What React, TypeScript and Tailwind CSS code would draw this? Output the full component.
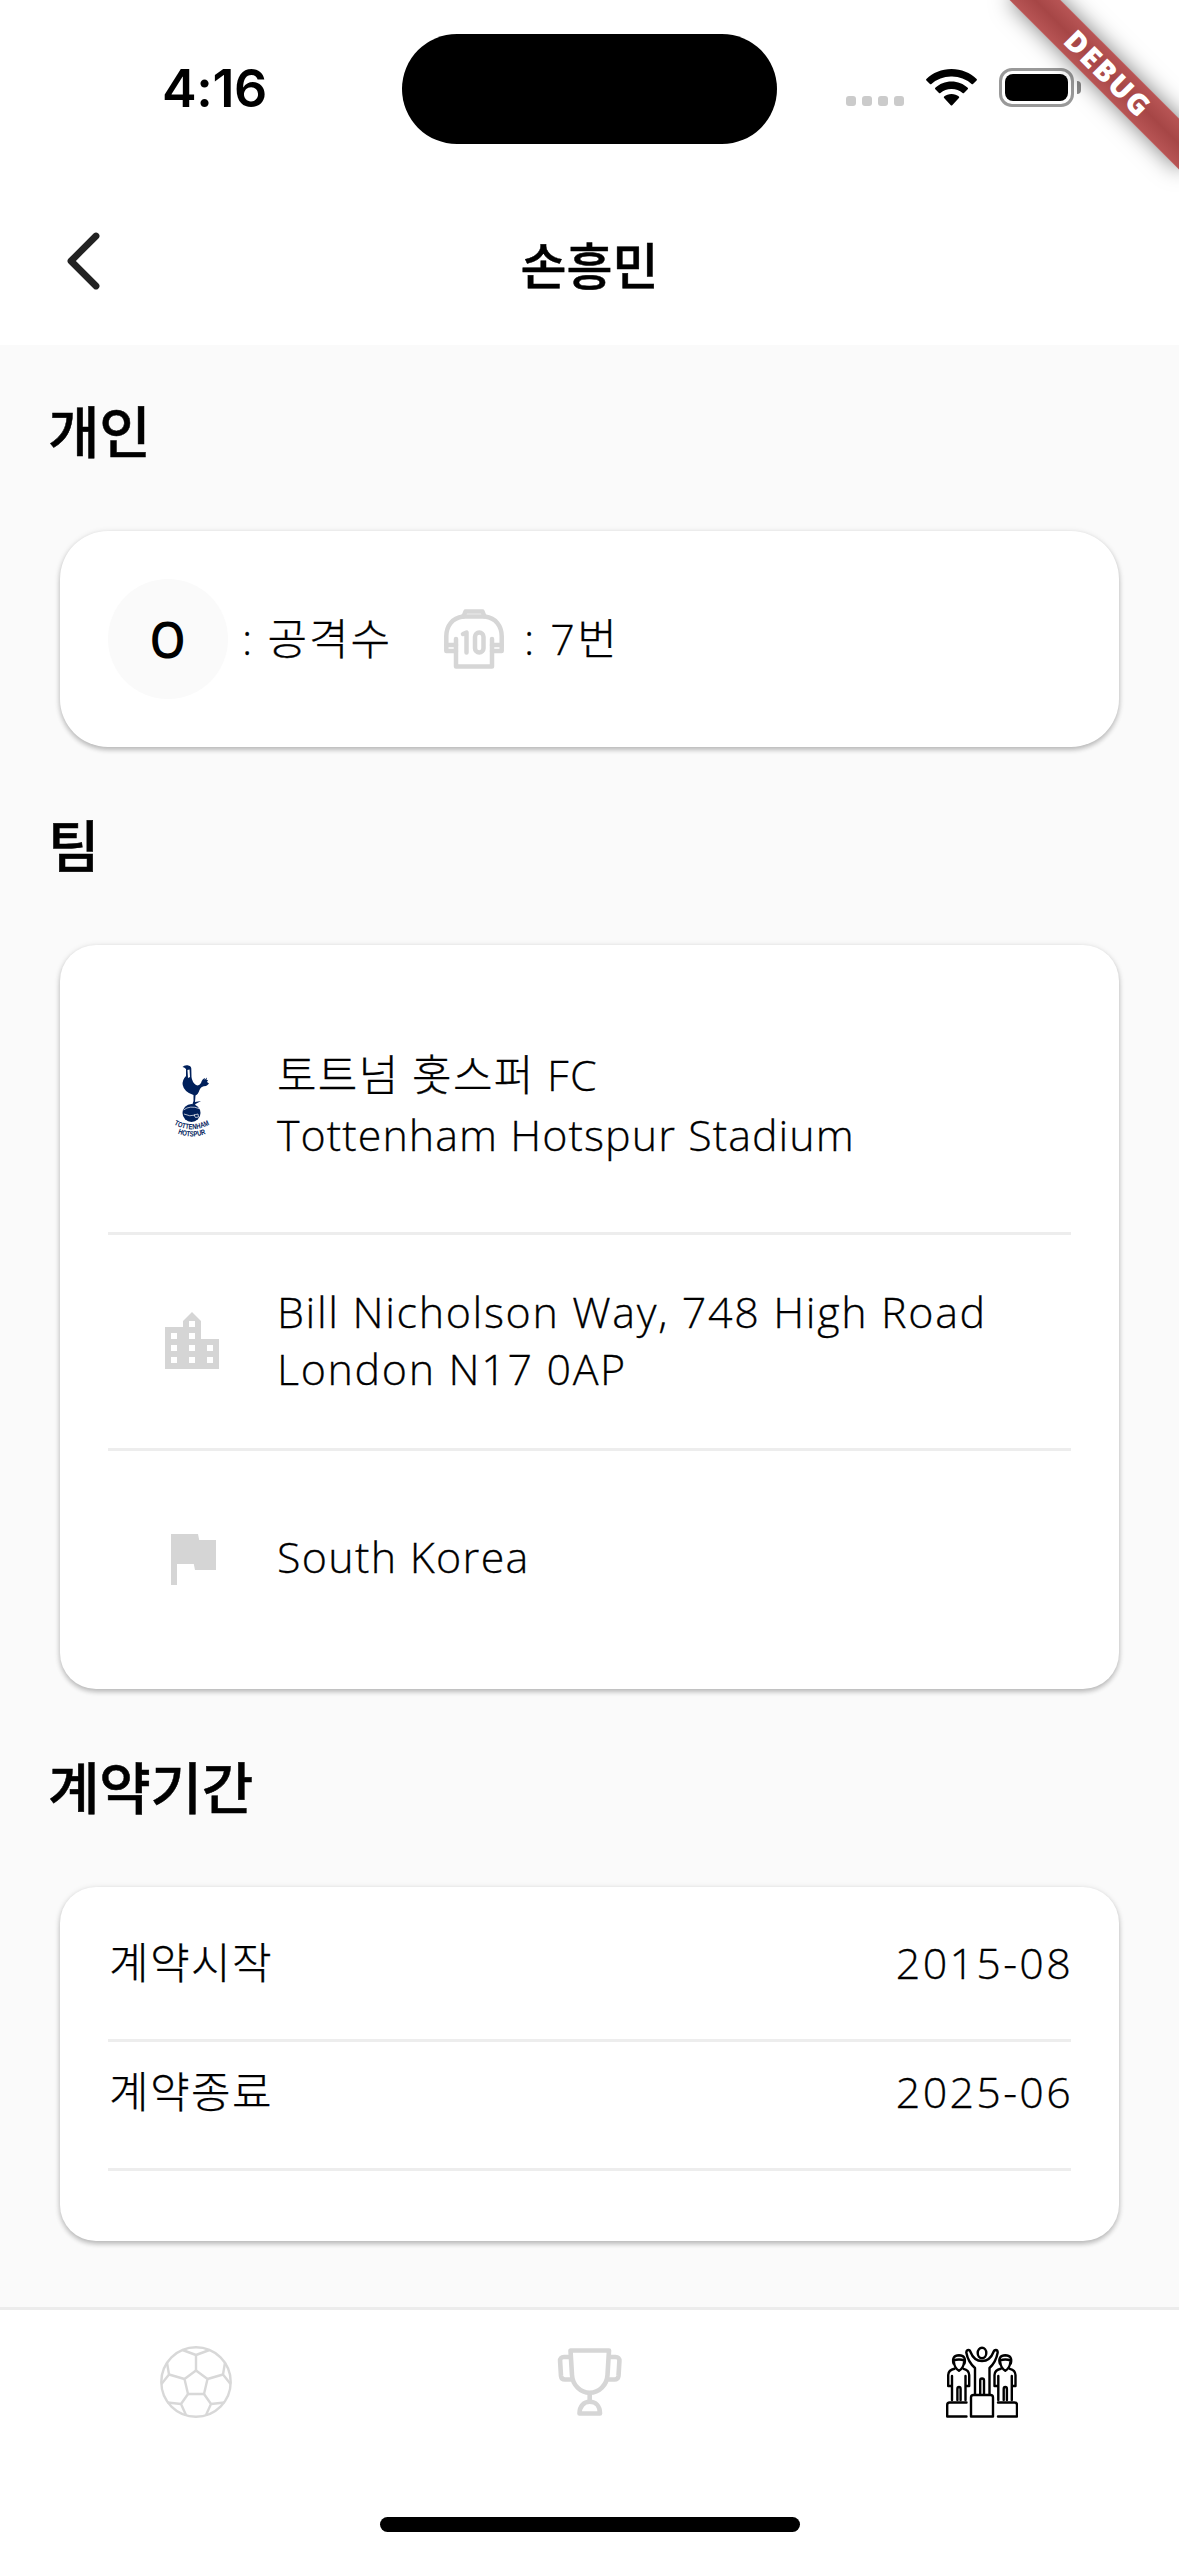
import type { ReactNode } from "react";

function StatusBar() {
  return (
    <div className="relative h-[177px] shrink-0">
      <div className="absolute left-[162px] top-[59px] text-[52px] leading-[60px] font-semibold tracking-[-0.4px] font-['Inter',sans-serif]">
        4:16
      </div>
      <div className="absolute left-[402px] top-[33.5px] h-[110.5px] w-[375px] rounded-full bg-black" />
      <div className="absolute left-[846px] top-[96px] flex gap-[6px]">
        {[0, 1, 2, 3].map((i) => (
          <span key={i} className="size-[10px] rounded-[3px] bg-[#cbcbcb]" />
        ))}
      </div>
      <svg className="absolute left-[926px] top-[69px]" width="51" height="37" viewBox="0 0 51 37">
        <path d="M25.5 0C35.4 0 44.2 3.800 50.600 10q.6.7 0 1.400l-3.600 3.600q-.7.6-1.400 0A29.500 29.500 0 0 0 25.500 7.500 29.500 29.500 0 0 0 5.400 15q-.7.6-1.400 0L.4 11.400q-.6-.7 0-1.400C6.800 3.800 15.600 0 25.500 0z" />
        <path d="M25.500 12.500c6.300 0 12 2.400 16.200 6.300q.7.7 0 1.400l-3.700 3.700q-.7.6-1.400 0A17 17 0 0 0 25.500 20a17 17 0 0 0-11.100 3.900q-.7.6-1.400 0l-3.700-3.700q-.7-.7 0-1.400c4.200-3.900 9.900-6.300 16.200-6.300z" />
        <path d="M25.500 25c2.900 0 5.400 1 7.400 2.600q.7.700 0 1.400l-6.700 7.200q-.7.700-1.400 0L18.100 29q-.7-.7 0-1.400C20.100 26 22.600 25 25.500 25z" />
      </svg>
      <div className="absolute left-[999px] top-[68px] h-[39px] w-[75px] rounded-[13px] border-3 border-[#999] p-[3px]">
        <div className="h-full w-full rounded-[8px] bg-black" />
      </div>
      <div className="absolute left-[1077px] top-[81px] h-[13px] w-[4px] rounded-r-full bg-[#888]" />
    </div>
  );
}

function DebugBanner() {
  return (
    <div className="absolute left-[987px] top-[54px] z-10 flex h-[36px] w-[240px] rotate-45 items-center justify-center bg-linear-to-b from-[#b85555] via-[#a64646] to-[#b85555] shadow-[0_0_22px_rgba(0,0,0,0.5)]">
      <span className="ml-[4px] text-[29px] leading-[36px] font-extrabold tracking-[1.8px] text-white font-['Open_Sans',sans-serif]">
        DEBUG
      </span>
    </div>
  );
}

function Heading({ children, first }: { children: ReactNode; first?: boolean }) {
  return (
    <h2
      className={
        (first ? "h-[186px] pb-[14px] " : "h-[198px] pb-[2px] ") +
        "flex items-center pl-[48px] text-[56px] leading-[60px] font-medium tracking-[-0.3px] [-webkit-text-stroke:0.5px_black]"
      }
    >
      {children}
    </h2>
  );
}

function Card({ children, className }: { children: ReactNode; className: string }) {
  return (
    <section
      className={
        "mx-[60px] bg-white px-[48px] shadow-[0_3px_5px_rgba(0,0,0,0.2),0_1px_6px_rgba(0,0,0,0.12)] " + className
      }
    >
      {children}
    </section>
  );
}

function JerseyIcon() {
  return (
    <svg width="60" height="60" viewBox="0 0 60 60" fill="none" stroke="#d6d6d6" strokeWidth="4.500" strokeLinecap="round" strokeLinejoin="round">
      <path d="M19.500 7.500 L21.500 2.500 H38.500 L40.500 7.500" />
      <path d="M19 7.500 H41 C52 9 57.500 17 57.700 27 V42 H48" />
      <path d="M19 7.500 C8 9 2.500 17 2.300 27 V42 H12" />
      <path d="M48 30 V57.500 H12 V30" />
      <path d="M3 36 H12 M48 36 H57" />
      <path d="M19 25 L22.500 23.500 V43.500" />
      <rect x="31" y="23.500" width="8.500" height="20" rx="4.250" />
    </svg>
  );
}

function ClubCrest() {
  return (
    <svg className="overflow-visible" width="72" height="72" viewBox="-8 0 72 72" fill="#00205b">
      <path d="M18.500 2 Q20 0 23.500 .3 Q27 .8 27.300 3.500 L27.500 12 Q28 17 32 20 Q35 21.500 37 18 Q38 14 41 13 L40.500 15 L43 12.500 L42.500 15 L44 15 L43 17 L45 18.500 L43.500 20 L42 21 Q37 21 35.500 25 Q34 29.500 31.500 30.500 L31 37 L37 36 L31.500 39 L30 42 L27.500 42 L29.500 36 L29.500 30 Q20 27 18.700 20 Q18 15 22 11 L22 4 Q20 2 18.500 2z" />
      <path d="M23.500 5 L25.500 4.500 L26 12 L24 13z" fill="#fff" />
      <circle cx="27.500" cy="48" r="9" />
      <path d="M19.500 45 Q26 40 35 43.500 M20 49 Q26 52 31 50 M30 50 l4 -1 l.5 3 l-3 .5z" fill="none" stroke="#fff" strokeWidth=".7" />
      <defs>
        <path id="arcTop" d="M10 59.500 Q27.500 69 46 59.500" />
        <path id="arcLow" d="M12.500 68 Q27.500 75 44 68" />
      </defs>
      <g fontFamily="Liberation Sans" fontWeight="700" fontSize="7.500">
        <text textLength="37" lengthAdjust="spacingAndGlyphs">
          <textPath href="#arcTop">TOTTENHAM</textPath>
        </text>
        <text textLength="29" lengthAdjust="spacingAndGlyphs">
          <textPath href="#arcLow" startOffset="4%">HOTSPUR</textPath>
        </text>
      </g>
    </svg>
  );
}

function CityIcon() {
  return (
    <svg width="72" height="72" viewBox="0 0 24 24" fill="#d5d5d5">
      <path d="M15 11V5l-3-3-3 3v2H3v14h18V11h-6zm-8 8H5v-2h2v2zm0-4H5v-2h2v2zm0-4H5V9h2v2zm6 8h-2v-2h2v2zm0-4h-2v-2h2v2zm0-4h-2V9h2v2zm0-4h-2V5h2v2zm6 12h-2v-2h2v2zm0-4h-2v-2h2v2z" />
    </svg>
  );
}

function FlagIcon() {
  return (
    <svg width="72" height="72" viewBox="0 0 24 24" fill="#d5d5d5">
      <path d="M14.400 6L14 4H5v17h2v-7h5.600l.4 2h7V6z" />
    </svg>
  );
}

function BallIcon() {
  return (
    <svg width="72" height="72" viewBox="0 0 72 72" fill="none" stroke="#d8d8d8" strokeWidth="2.400" strokeLinejoin="round">
      <circle cx="36" cy="36" r="34.700" />
      <path d="M36 24.500 L47.500 33 L44 48 H28 L24.500 33z" />
      <path d="M36 24.500 V9 M22.500 4 L36 9 L49.500 4" />
      <path d="M47.500 33 L63 28.500 M65 16.500 L63 28.500 L70.500 38" />
      <path d="M24.500 33 L9 28.500 M7 16.500 L9 28.500 L1.500 38" />
      <path d="M44 48 L51 58 M64.500 56.500 L51 58 L46 69" />
      <path d="M28 48 L21 58 M7.500 56.500 L21 58 L26 69" />
    </svg>
  );
}

function TrophyIcon() {
  return (
    <svg width="72" height="72" viewBox="0 0 72 72" fill="none" stroke="#d6d6d6" strokeWidth="4.600" strokeLinejoin="round">
      <path d="M17.500 4.500 H56 L54.500 29 C54 39 46 46.800 36.700 46.800 C27.500 46.800 19.500 39 19 29z" />
      <path d="M18 11 H11 Q7 11 7.100 15 L8 30 Q8.400 33.500 12 33.500 H19.500" />
      <path d="M55.500 11 H62.500 Q66.500 11 66.400 15 L65.500 30 Q65 33.500 61.500 33.500 H54" />
      <path d="M36.700 47 V56" />
      <path d="M26.500 67.500 C26.500 60 31 55.800 36.700 55.800 C42.500 55.800 47 60 47 67.500z" />
    </svg>
  );
}

function SidePerson() {
  return (
    <>
      <path d="M7.500 17.500 Q5.500 9.500 13 9.200 Q20.500 9.500 18.500 17.500" />
      <path d="M7.500 14.500 Q13 12.500 18.500 14.500" />
      <path d="M8 16.500 Q8.500 22 13 24.800 Q17.500 22 18 16.500" />
      <path d="M8.500 22.800 Q2.500 24 2.200 29 V40 H6 V30 M6 40 V54 M17.500 22.800 Q23 24 23.200 29 V40 H19.500 V30 M19.500 40 V54" />
      <path d="M11.400 54 V43 Q11.400 41 13 41 Q14.600 41 14.600 43 V54" />
    </>
  );
}

function PodiumIcon() {
  return (
    <svg width="72" height="72" viewBox="0 0 72 72" fill="none" stroke="#000" strokeWidth="2.400" strokeLinejoin="round" strokeLinecap="round">
      <g>
        <SidePerson />
      </g>
      <g transform="translate(46.300 0)">
        <SidePerson />
      </g>
      <path d="M20.500 70.500 H1.200 V59 Q1.200 56.500 3.700 56.500 H20.500" />
      <path d="M52 70.500 H71 V59 Q71 56.500 68.500 56.500 H52" />
      <path d="M25 70.500 V51.500 Q25 49 27.500 49 H44.500 Q47 49 47 51.500 V70.500z" />
      <ellipse cx="36" cy="7" rx="4.300" ry="5.300" />
      <path d="M29 48.500 V22 Q22 16 20.300 6.500 Q20.500 4 22.500 4 Q24 4 24.500 6 Q28 15 36 15 Q44 15 47.500 6 Q48 4 49.800 4 Q51.700 4.200 51.700 6.500 Q50 16 43.500 22 V48.500" />
      <path d="M34.200 48.500 V34.500 Q34.200 32.500 36 32.500 Q38 32.500 38 34.500 V48.500" />
    </svg>
  );
}

export default function App() {
  return (
    <div className="relative flex h-[2556px] w-[1179px] flex-col overflow-hidden bg-[#fafafa] text-[43px] font-light text-black font-['Open_Sans','Noto_Sans_CJK_KR',sans-serif]">
      <DebugBanner />
      <header className="h-[345px] shrink-0 bg-white">
        <StatusBar />
        <div className="grid h-[168px] grid-cols-[1fr_auto_1fr] items-center">
          <svg className="ml-[63px]" width="40" height="60" viewBox="0 0 40 60" fill="none" stroke="#222" strokeWidth="6.800" strokeLinecap="round" strokeLinejoin="round">
            <path d="M33 5 L8 30 L33 55" />
          </svg>
          <h1 className="pt-[9px] text-[50px] leading-[60px] font-medium [-webkit-text-stroke:0.5px_black]">손흥민</h1>
        </div>
      </header>

      <main className="flex-1">
        <Heading first>개인</Heading>
        <Card className="flex h-[216px] items-center rounded-[48px]">
          <div className="flex size-[120px] items-center justify-center rounded-full bg-[#fafafa] text-[50px] font-semibold">
            <span className="scale-x-[0.92]">O</span>
          </div>
          <span className="ml-[14px] tracking-[2px] [-webkit-text-stroke:0.3px_black]">: 공격수</span>
          <div className="ml-[52px]">
            <JerseyIcon />
          </div>
          <span className="ml-[20px] tracking-[2.4px] [-webkit-text-stroke:0.3px_black]">: 7번</span>
        </Card>

        <Heading>팀</Heading>
        <Card className="flex h-[744px] flex-col rounded-[36px] pt-[48px] [-webkit-text-stroke:0.3px_black]">
          <div className="flex h-[242px] items-center gap-[49px] border-b-3 border-[#ededed] pb-[24px] pl-[48px]">
            <ClubCrest />
            <p className="pt-[8px] leading-[60px]">
              <span className="tracking-[1.3px]">토트넘 홋스퍼 FC</span>
              <br />
              <span className="tracking-[1.05px]">Tottenham Hotspur Stadium</span>
            </p>
          </div>
          <div className="flex h-[216px] items-center gap-[49px] border-b-3 border-[#ededed] pl-[48px]">
            <CityIcon />
            <p className="pb-[4px] leading-[57px]">
              <span className="tracking-[1.65px]">Bill Nicholson Way, 748 High Road</span>
              <br />
              <span className="tracking-[1.65px]">London N17 0AP</span>
            </p>
          </div>
          <div className="flex h-[213px] items-center gap-[49px] pl-[48px]">
            <FlagIcon />
            <p className="tracking-[1.3px]">South Korea</p>
          </div>
        </Card>

        <Heading>계약기간</Heading>
        <Card className="h-[354px] rounded-[36px] pt-[26px] tracking-[1.4px] [-webkit-text-stroke:0.3px_black]">
          <div className="flex h-[129px] items-center justify-between border-b-3 border-[#ededed] pb-[25px]">
            <span className="pl-px">계약시작</span>
            <span className="-mr-[2px] tracking-[2.3px]">2015-08</span>
          </div>
          <div className="flex h-[129px] items-center justify-between border-b-3 border-[#ededed] pb-[25px]">
            <span className="pl-px">계약종료</span>
            <span className="-mr-[2px] tracking-[2.3px]">2025-06</span>
          </div>
        </Card>
      </main>

      <footer className="flex h-[249px] shrink-0 flex-col items-center justify-between border-t-3 border-[#ececec] bg-white pt-[36px] pb-[24px]">
        <nav className="grid w-full grid-cols-3 justify-items-center pr-px">
          <BallIcon />
          <TrophyIcon />
          <PodiumIcon />
        </nav>
        <div className="h-[15px] w-[420px] rounded-full bg-black" />
      </footer>
    </div>
  );
}
